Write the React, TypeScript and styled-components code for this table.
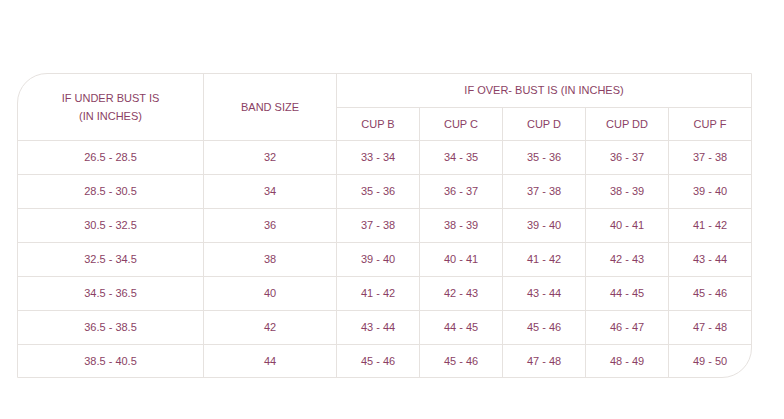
import React from "react";
import styled, { createGlobalStyle } from "styled-components";

const Global = createGlobalStyle`
  html, body { margin: 0; padding: 0; background: #fff; }
  body { font-family: "Liberation Sans", Arial, sans-serif; }
`;

const Page = styled.div`
  padding: 73px 0 0 17px;
`;

const Table = styled.div`
  display: grid;
  width: max-content;
  grid-template-columns: 186px 133px repeat(4, 83px) 82px;
  grid-template-rows: 34px 33px repeat(6, 34px) 32px;
  border: 1px solid #e6e2df;
  border-radius: 30px 0 30px 0;
  overflow: hidden;
  color: #8b3f64;
  font-size: 11px;
`;

const Cell = styled.div<{ $lastCol?: boolean; $lastRow?: boolean; $rowSpan?: number; $colSpan?: number }>`
  display: flex;
  align-items: center;
  justify-content: center;
  text-align: center;
  line-height: 18px;
  padding-bottom: 1px;
  box-sizing: border-box;
  border-right: ${(p) => (p.$lastCol ? "none" : "1px solid #e6e2df")};
  border-bottom: ${(p) => (p.$lastRow ? "none" : "1px solid #e6e2df")};
  ${(p) => (p.$rowSpan ? `grid-row: span ${p.$rowSpan};` : "")}
  ${(p) => (p.$colSpan ? `grid-column: span ${p.$colSpan};` : "")}
`;

const cups = ["CUP B", "CUP C", "CUP D", "CUP DD", "CUP F"];

const rows: [string, string, string[]][] = [
  ["26.5 - 28.5", "32", ["33 - 34", "34 - 35", "35 - 36", "36 - 37", "37 - 38"]],
  ["28.5 - 30.5", "34", ["35 - 36", "36 - 37", "37 - 38", "38 - 39", "39 - 40"]],
  ["30.5 - 32.5", "36", ["37 - 38", "38 - 39", "39 - 40", "40 - 41", "41 - 42"]],
  ["32.5 - 34.5", "38", ["39 - 40", "40 - 41", "41 - 42", "42 - 43", "43 - 44"]],
  ["34.5 - 36.5", "40", ["41 - 42", "42 - 43", "43 - 44", "44 - 45", "45 - 46"]],
  ["36.5 - 38.5", "42", ["43 - 44", "44 - 45", "45 - 46", "46 - 47", "47 - 48"]],
  ["38.5 - 40.5", "44", ["45 - 46", "45 - 46", "47 - 48", "48 - 49", "49 - 50"]],
];

export default function App() {
  return (
    <>
      <Global />
      <Page>
        <Table>
          <Cell $rowSpan={2}>
            IF UNDER BUST IS
            <br />
            (IN INCHES)
          </Cell>
          <Cell $rowSpan={2}>BAND SIZE</Cell>
          <Cell $colSpan={5} $lastCol>
            IF OVER- BUST IS (IN INCHES)
          </Cell>
          {cups.map((c, i) => (
            <Cell key={c} $lastCol={i === cups.length - 1}>
              {c}
            </Cell>
          ))}
          {rows.map(([under, band, vals], r) => {
            const last = r === rows.length - 1;
            return (
              <React.Fragment key={under}>
                <Cell $lastRow={last}>{under}</Cell>
                <Cell $lastRow={last}>{band}</Cell>
                {vals.map((v, i) => (
                  <Cell key={i} $lastRow={last} $lastCol={i === vals.length - 1}>
                    {v}
                  </Cell>
                ))}
              </React.Fragment>
            );
          })}
        </Table>
      </Page>
    </>
  );
}
